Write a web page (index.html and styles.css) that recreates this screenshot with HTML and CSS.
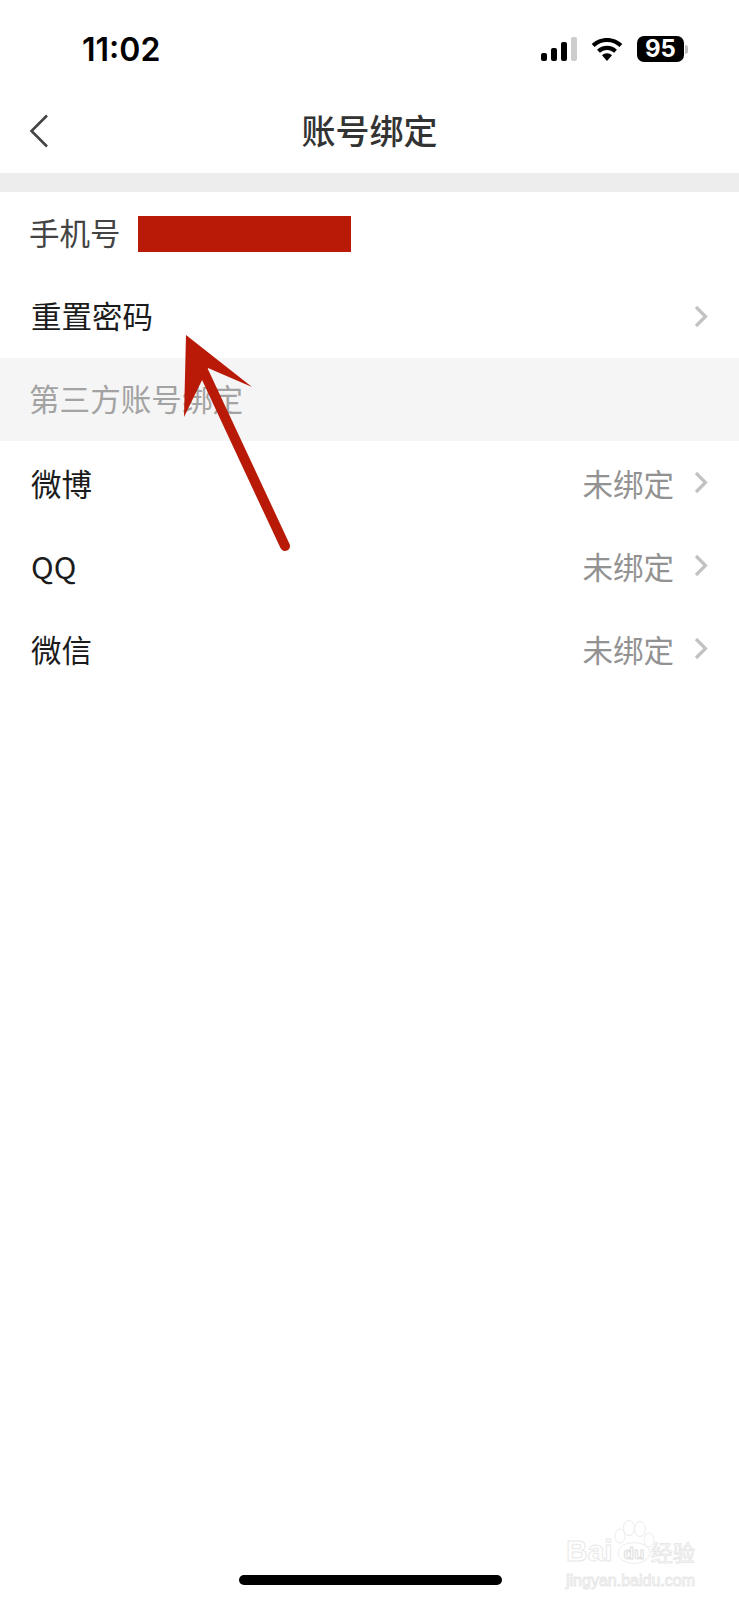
FILE: index.html
```html
<!DOCTYPE html>
<html>
<head>
    <title>账号绑定</title>
    <link rel="stylesheet" href="styles.css">
</head>
<body>
    <div class="page">
        <div class="status-bar">
            <span class="time">11:02</span>
            <div class="status-icons">
                <div class="signal">
                    <span class="bar bar-1"></span>
                    <span class="bar bar-2"></span>
                    <span class="bar bar-3"></span>
                    <span class="bar bar-4"></span>
                </div>
                <svg class="wifi" width="32" height="24" viewBox="0 0 32 24">
                    <path d="M16 1c-5.900 0-11.300 2.300-15.300 6.100l2.800 3C6.800 7 11.200 5.100 16 5.100s9.200 1.900 12.500 5l2.800-3C27.300 3.300 21.900 1 16 1z" fill="#000"/>
                    <path d="M16 8.800c-3.800 0-7.300 1.500-9.900 3.900l2.800 3c1.900-1.700 4.400-2.800 7.100-2.800s5.200 1.100 7.100 2.800l2.800-3c-2.600-2.400-6.100-3.900-9.900-3.900z" fill="#000"/>
                    <path d="M16 16.300c-2 0-3.700.8-5 2L16 24l5-5.700c-1.300-1.200-3-2-5-2z" fill="#000"/>
                </svg>
                <div class="battery">
                    <span class="battery-body">95</span>
                    <span class="battery-nub"></span>
                </div>
            </div>
        </div>

        <div class="nav-bar">
            <svg class="back" width="20" height="34" viewBox="0 0 20 34">
                <path d="M18 1.500L2.500 17 18 32.500" fill="none" stroke="#444" stroke-width="2.600"/>
            </svg>
            <h1 class="nav-title">账号绑定</h1>
        </div>

        <div class="gap-band"></div>

        <div class="row row-phone">
            <span class="phone-label">手机号</span>
            <span class="phone-mask"></span>
        </div>
        <div class="row row-reset">
            <span class="row-label">重置密码</span>
            <svg class="chevron" width="14" height="23" viewBox="0 0 14 23">
                <path d="M2 2l9.500 9.500L2 21" fill="none" stroke="#c2c2c2" stroke-width="3.200"/>
            </svg>
        </div>

        <div class="section-title">第三方账号绑定</div>

        <div class="row">
            <span class="row-label">微博</span>
            <span class="row-value">未绑定</span>
            <svg class="chevron" width="14" height="23" viewBox="0 0 14 23">
                <path d="M2 2l9.500 9.500L2 21" fill="none" stroke="#c2c2c2" stroke-width="3.200"/>
            </svg>
        </div>
        <div class="row">
            <span class="row-label">QQ</span>
            <span class="row-value">未绑定</span>
            <svg class="chevron" width="14" height="23" viewBox="0 0 14 23">
                <path d="M2 2l9.500 9.500L2 21" fill="none" stroke="#c2c2c2" stroke-width="3.200"/>
            </svg>
        </div>
        <div class="row">
            <span class="row-label">微信</span>
            <span class="row-value">未绑定</span>
            <svg class="chevron" width="14" height="23" viewBox="0 0 14 23">
                <path d="M2 2l9.500 9.500L2 21" fill="none" stroke="#c2c2c2" stroke-width="3.200"/>
            </svg>
        </div>

        <!-- annotation drawn on top of the screenshot -->
        <svg class="red-arrow" width="739" height="600" viewBox="0 0 739 600">
            <path d="M186 335L252 387 208 368 184 417z" fill="#b91a07"/>
            <path d="M201 366L285 546" fill="none" stroke="#b91a07" stroke-width="10" stroke-linecap="round"/>
        </svg>

        <div class="watermark">
            <svg class="paw" width="44" height="46" viewBox="0 0 44 46">
                <g fill="#fff" stroke="#ececec" stroke-width="1">
                    <ellipse cx="8" cy="17" rx="5" ry="7"/>
                    <ellipse cx="17" cy="9" rx="5.500" ry="7.500"/>
                    <ellipse cx="28" cy="10" rx="5.500" ry="7.500"/>
                    <ellipse cx="37" cy="21" rx="5" ry="7"/>
                    <ellipse cx="22" cy="34" rx="16" ry="10.500"/>
                </g>
                <text class="wm-du" x="22" y="40">du</text>
            </svg>
            <div class="wm-main">
                <span>Bai</span><span class="wm-cn">经验</span>
            </div>
            <div class="wm-url">jingyan.baidu.com</div>
        </div>

        <div class="home-indicator"></div>
    </div>
</body>
</html>
```

FILE: styles.css
```css
body {
    margin: 0;
    font-family: "Noto Sans CJK SC", "Noto Sans", sans-serif;
    background-color: #fff;
}
.page {
    position: relative;
    width: 739px;
    height: 1600px;
    overflow: hidden;
    background-color: #fff;
}

/* status bar */
.status-bar {
    display: flex;
    align-items: center;
    justify-content: space-between;
    height: 98px;
    padding: 0 51px 0 82px;
    box-sizing: border-box;
}
.time {
    font-family: Inter, "Liberation Sans", sans-serif;
    font-size: 32px;
    font-weight: 600;
    color: #000;
}
.status-icons {
    display: flex;
    align-items: center;
}
.signal {
    display: flex;
    align-items: flex-end;
    gap: 4px;
    height: 24px;
    margin-right: 14px;
}
.bar {
    width: 6px;
    background-color: #000;
    border-radius: 2px;
}
.bar-1 { height: 8px; }
.bar-2 { height: 13px; }
.bar-3 { height: 19px; }
.bar-4 { height: 24px; background-color: #cdcdcd; }
.wifi {
    margin-right: 14px;
}
.battery {
    display: flex;
    align-items: center;
}
.battery-body {
    width: 47px;
    height: 26px;
    line-height: 26px;
    text-align: center;
    background-color: #000;
    border-radius: 7px;
    color: #fff;
    font-family: Inter, "Liberation Sans", sans-serif;
    font-size: 24px;
    font-weight: 700;
}
.battery-nub {
    width: 3px;
    height: 9px;
    margin-left: 1px;
    background-color: #bdbdbd;
    border-radius: 0 3px 3px 0;
}

/* nav */
.nav-bar {
    position: relative;
    height: 75px;
    display: flex;
    align-items: center;
    justify-content: center;
}
.back {
    position: absolute;
    left: 29px;
    top: 16px;
}
.nav-title {
    margin: 0 0 12px;
    font-size: 34px;
    font-weight: 500;
    color: #333;
}
.gap-band {
    height: 19px;
    background-color: #ededed;
}

/* list */
.row {
    display: flex;
    align-items: center;
    height: 83px;
    padding: 0 31px;
    font-size: 30.5px;
    color: #1c1c1c;
}
.row-phone {
    padding-left: 29px;
}
.row-phone .phone-label,
.row-reset .row-label {
    margin-bottom: 4px;
}
.phone-label {
    color: #444;
    width: 109px;
}
.phone-mask {
    width: 213px;
    height: 36px;
    background-color: #b91a07;
}
.row-label {
    flex: 1;
}
.row-value {
    color: #929292;
    margin-right: 20px;
}
.section-title {
    height: 83px;
    line-height: 80px;
    padding-left: 29px;
    background-color: #f5f5f5;
    font-size: 30.6px;
    color: #a3a3a3;
}

/* overlays */
.red-arrow {
    position: absolute;
    left: 0;
    top: 0;
}
.watermark {
    position: absolute;
    left: 566px;
    top: 1518px;
    width: 140px;
    color: #fff;
    -webkit-text-stroke: 1px #e8e8e8;
    font-family: "Liberation Sans", sans-serif;
}
.paw {
    position: absolute;
    left: 46px;
    top: 1px;
}
.wm-main {
    position: absolute;
    left: 0;
    top: 17px;
    display: flex;
    align-items: center;
    white-space: nowrap;
    font-size: 30px;
    font-weight: 700;
    line-height: 32px;
}
.wm-du {
    font-size: 17px;
    font-weight: 700;
    text-anchor: middle;
    fill: #fff;
    stroke: #e0e0e0;
    stroke-width: 1px;
}
.wm-cn {
    margin-left: 38px;
    font-family: "Noto Sans CJK SC", sans-serif;
    font-size: 22px;
    font-weight: 400;
}
.wm-url {
    position: absolute;
    left: 0;
    top: 54px;
    white-space: nowrap;
    font-size: 16px;
}
.home-indicator {
    position: absolute;
    left: 239px;
    bottom: 15px;
    width: 263px;
    height: 10px;
    background-color: #000;
    border-radius: 5px;
}
```
